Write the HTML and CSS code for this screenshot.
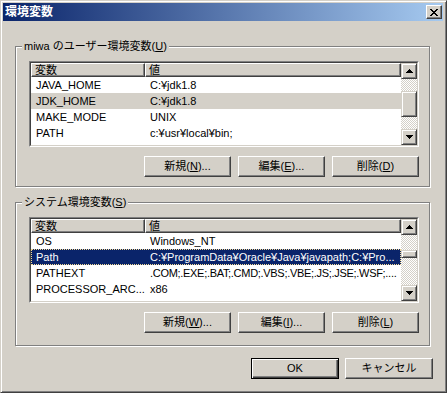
FILE: index.html
```html
<!DOCTYPE html>
<html lang="ja">
<head>
  <meta charset="UTF-8">
  <title>環境変数</title>
  <link rel="stylesheet" href="styles.css">
</head>
<body>
  <div class="window">
    <div class="titlebar">
      <span class="title">環境変数</span>
      <button class="close-btn">
        <svg width="8" height="7" viewBox="0 0 8 7" shape-rendering="crispEdges"><path d="M0 0h2v1H0z M6 0h2v1H6z M1 1h2v1H1z M5 1h2v1H5z M2 2h4v1H2z M3 3h2v1H3z M2 4h4v1H2z M1 5h2v1H1z M5 5h2v1H5z M0 6h2v1H0z M6 6h2v1H6z" fill="#000"/></svg>
      </button>
    </div>

    <div class="dialog-body">
      <!-- user variables -->
      <fieldset class="group">
        <legend>miwa のユーザー環境変数(<u>U</u>)</legend>
        <div class="group-content">
          <div class="listview">
            <div class="listview-inner">
              <div class="list-main">
                <div class="list-header"><div class="hcell">変数</div><div class="hcell">値</div></div>
                <div class="list-row"><div class="cell">JAVA_HOME</div><div class="cell">C:¥jdk1.8</div></div>
                <div class="list-row inactive-sel"><div class="cell">JDK_HOME</div><div class="cell">C:¥jdk1.8</div></div>
                <div class="list-row"><div class="cell">MAKE_MODE</div><div class="cell">UNIX</div></div>
                <div class="list-row"><div class="cell">PATH</div><div class="cell">c:¥usr¥local¥bin;</div></div>
              </div>
              <div class="scrollbar">
                <div class="sb-btn"><svg width="7" height="4" viewBox="0 0 7 4" shape-rendering="crispEdges"><path d="M3 0h1v1H3z M2 1h3v1H2z M1 2h5v1H1z M0 3h7v1H0z"/></svg></div>
                <div class="sb-track"><div class="sb-thumb" style="margin-top:12px;height:26px"></div></div>
                <div class="sb-btn"><svg width="7" height="4" viewBox="0 0 7 4" shape-rendering="crispEdges"><path d="M0 0h7v1H0z M1 1h5v1H1z M2 2h3v1H2z M3 3h1v1H3z"/></svg></div>
              </div>
            </div>
          </div>
          <div class="btn-row">
            <button class="btn">新規(<u>N</u>)...</button>
            <button class="btn">編集(<u>E</u>)...</button>
            <button class="btn">削除(<u>D</u>)</button>
          </div>
        </div>
      </fieldset>

      <!-- system variables -->
      <fieldset class="group group-system">
        <legend>システム環境変数(<u>S</u>)</legend>
        <div class="group-content">
          <div class="listview">
            <div class="listview-inner">
              <div class="list-main">
                <div class="list-header"><div class="hcell">変数</div><div class="hcell">値</div></div>
                <div class="list-row"><div class="cell">OS</div><div class="cell">Windows_NT</div></div>
                <div class="list-row selected"><div class="cell">Path</div><div class="cell">C:¥ProgramData¥Oracle¥Java¥javapath;C:¥Pro...</div></div>
                <div class="list-row"><div class="cell">PATHEXT</div><div class="cell cell-tight">.COM;.EXE;.BAT;.CMD;.VBS;.VBE;.JS;.JSE;.WSF;....</div></div>
                <div class="list-row"><div class="cell">PROCESSOR_ARC...</div><div class="cell">x86</div></div>
              </div>
              <div class="scrollbar">
                <div class="sb-btn"><svg width="7" height="4" viewBox="0 0 7 4" shape-rendering="crispEdges"><path d="M3 0h1v1H3z M2 1h3v1H2z M1 2h5v1H1z M0 3h7v1H0z"/></svg></div>
                <div class="sb-track"><div class="sb-thumb" style="margin-top:15px;height:8px"></div></div>
                <div class="sb-btn"><svg width="7" height="4" viewBox="0 0 7 4" shape-rendering="crispEdges"><path d="M0 0h7v1H0z M1 1h5v1H1z M2 2h3v1H2z M3 3h1v1H3z"/></svg></div>
              </div>
            </div>
          </div>
          <div class="btn-row">
            <button class="btn">新規(<u>W</u>)...</button>
            <button class="btn">編集(<u>I</u>)...</button>
            <button class="btn">削除(<u>L</u>)</button>
          </div>
        </div>
      </fieldset>

      <div class="dialog-buttons">
        <button class="btn btn-wide btn-default">OK</button>
        <button class="btn btn-wide">キャンセル</button>
      </div>
    </div>
  </div>
</body>
</html>
```

FILE: styles.css
```css
* {
  box-sizing: border-box;
}

body {
  margin: 0;
  font-family: "Liberation Sans", "Noto Sans CJK JP", sans-serif;
  font-size: 11px;
  color: #000;
  background: #d4d0c8;
}

.window {
  width: 447px;
  height: 393px;
  background: #d4d0c8;
  border: 1px solid;
  border-color: #d4d0c8 #404040 #404040 #d4d0c8;
  box-shadow: inset 1px 1px #fff, inset -1px -1px #808080;
  padding: 2px 3px 2px 2px;
}

.titlebar {
  height: 18px;
  display: flex;
  align-items: center;
  justify-content: space-between;
  padding: 0 1px 0 2px;
  background: linear-gradient(to right, #0a246a, #a6caf0);
}

.title {
  color: #fff;
  font-weight: bold;
  font-size: 12px;
  line-height: 18px;
}

.close-btn {
  width: 16px;
  height: 14px;
  padding: 0;
  background: #d4d0c8;
  border: 1px solid;
  border-color: #fff #404040 #404040 #fff;
  box-shadow: inset -1px -1px #808080;
  display: flex;
  align-items: center;
  justify-content: center;
}

.dialog-body {
  padding-top: 19px;
}

.group {
  margin: 0 13px 0 12px;
  padding: 8px 10px 9px 6px;
  border: 1px solid #808080;
  box-shadow: inset 1px 1px #fff, 1px 1px #fff;
  min-width: 0;
}

.group + .group {
  margin-top: 9px;
}

.group-system {
  padding-bottom: 12px;
}

.group legend {
  padding: 0 2px;
  line-height: 13px;
  background: #d4d0c8;
}

.group-content {
  margin-left: 7px;
}

.listview {
  height: 86px;
  border: 1px solid;
  border-color: #808080 #fff #fff #808080;
}

.listview-inner {
  height: 100%;
  display: flex;
  border: 1px solid;
  border-color: #404040 #d4d0c8 #d4d0c8 #404040;
  background: #fff;
}

.list-main {
  flex: 1;
  min-width: 0;
  overflow: hidden;
}

.list-header {
  display: grid;
  grid-template-columns: 114px 1fr;
  height: 14px;
}

.hcell {
  background: #d4d0c8;
  border: 1px solid;
  border-color: #fff #404040 #404040 #fff;
  box-shadow: inset -1px -1px #808080;
  padding-left: 3px;
  line-height: 12px;
  overflow: hidden;
}

.list-row {
  display: grid;
  grid-template-columns: 114px 1fr;
  height: 16px;
  line-height: 16px;
}

.cell {
  padding-left: 5px;
  white-space: nowrap;
  overflow: hidden;
}

.cell-tight {
  letter-spacing: -0.3px;
}

.list-row.inactive-sel {
  background: #d4d0c8;
}

.list-row.selected {
  background: #0a246a;
  color: #fff;
  outline: 1px dotted #f5db95;
  outline-offset: -1px;
}

.scrollbar {
  width: 16px;
  display: flex;
  flex-direction: column;
}

.sb-btn,
.sb-thumb {
  background: #d4d0c8;
  border: 1px solid;
  border-color: #d4d0c8 #404040 #404040 #d4d0c8;
  box-shadow: inset 1px 1px #fff, inset -1px -1px #808080;
}

.sb-btn {
  height: 16px;
  flex: none;
  display: flex;
  align-items: center;
  justify-content: center;
}

.sb-track {
  flex: 1;
  background: repeating-conic-gradient(#fff 0 25%, #d4d0c8 0 50%) 0 0 / 2px 2px;
}

.btn-row {
  display: flex;
  justify-content: flex-end;
  gap: 7px;
  margin-top: 9px;
}

.btn {
  width: 87px;
  height: 21px;
  padding: 0;
  font: inherit;
  color: #000;
  line-height: 19px;
  background: #d4d0c8;
  border: 1px solid;
  border-color: #fff #404040 #404040 #fff;
  box-shadow: inset -1px -1px #808080;
}

.dialog-buttons {
  display: flex;
  justify-content: flex-end;
  gap: 6px;
  margin: 12px 10px 0 0;
}

.btn-wide {
  width: 88px;
}

.btn-default {
  border-color: #000;
  box-shadow: inset 1px 1px #fff, inset -1px -1px #404040, inset -2px -2px #808080;
}
```
